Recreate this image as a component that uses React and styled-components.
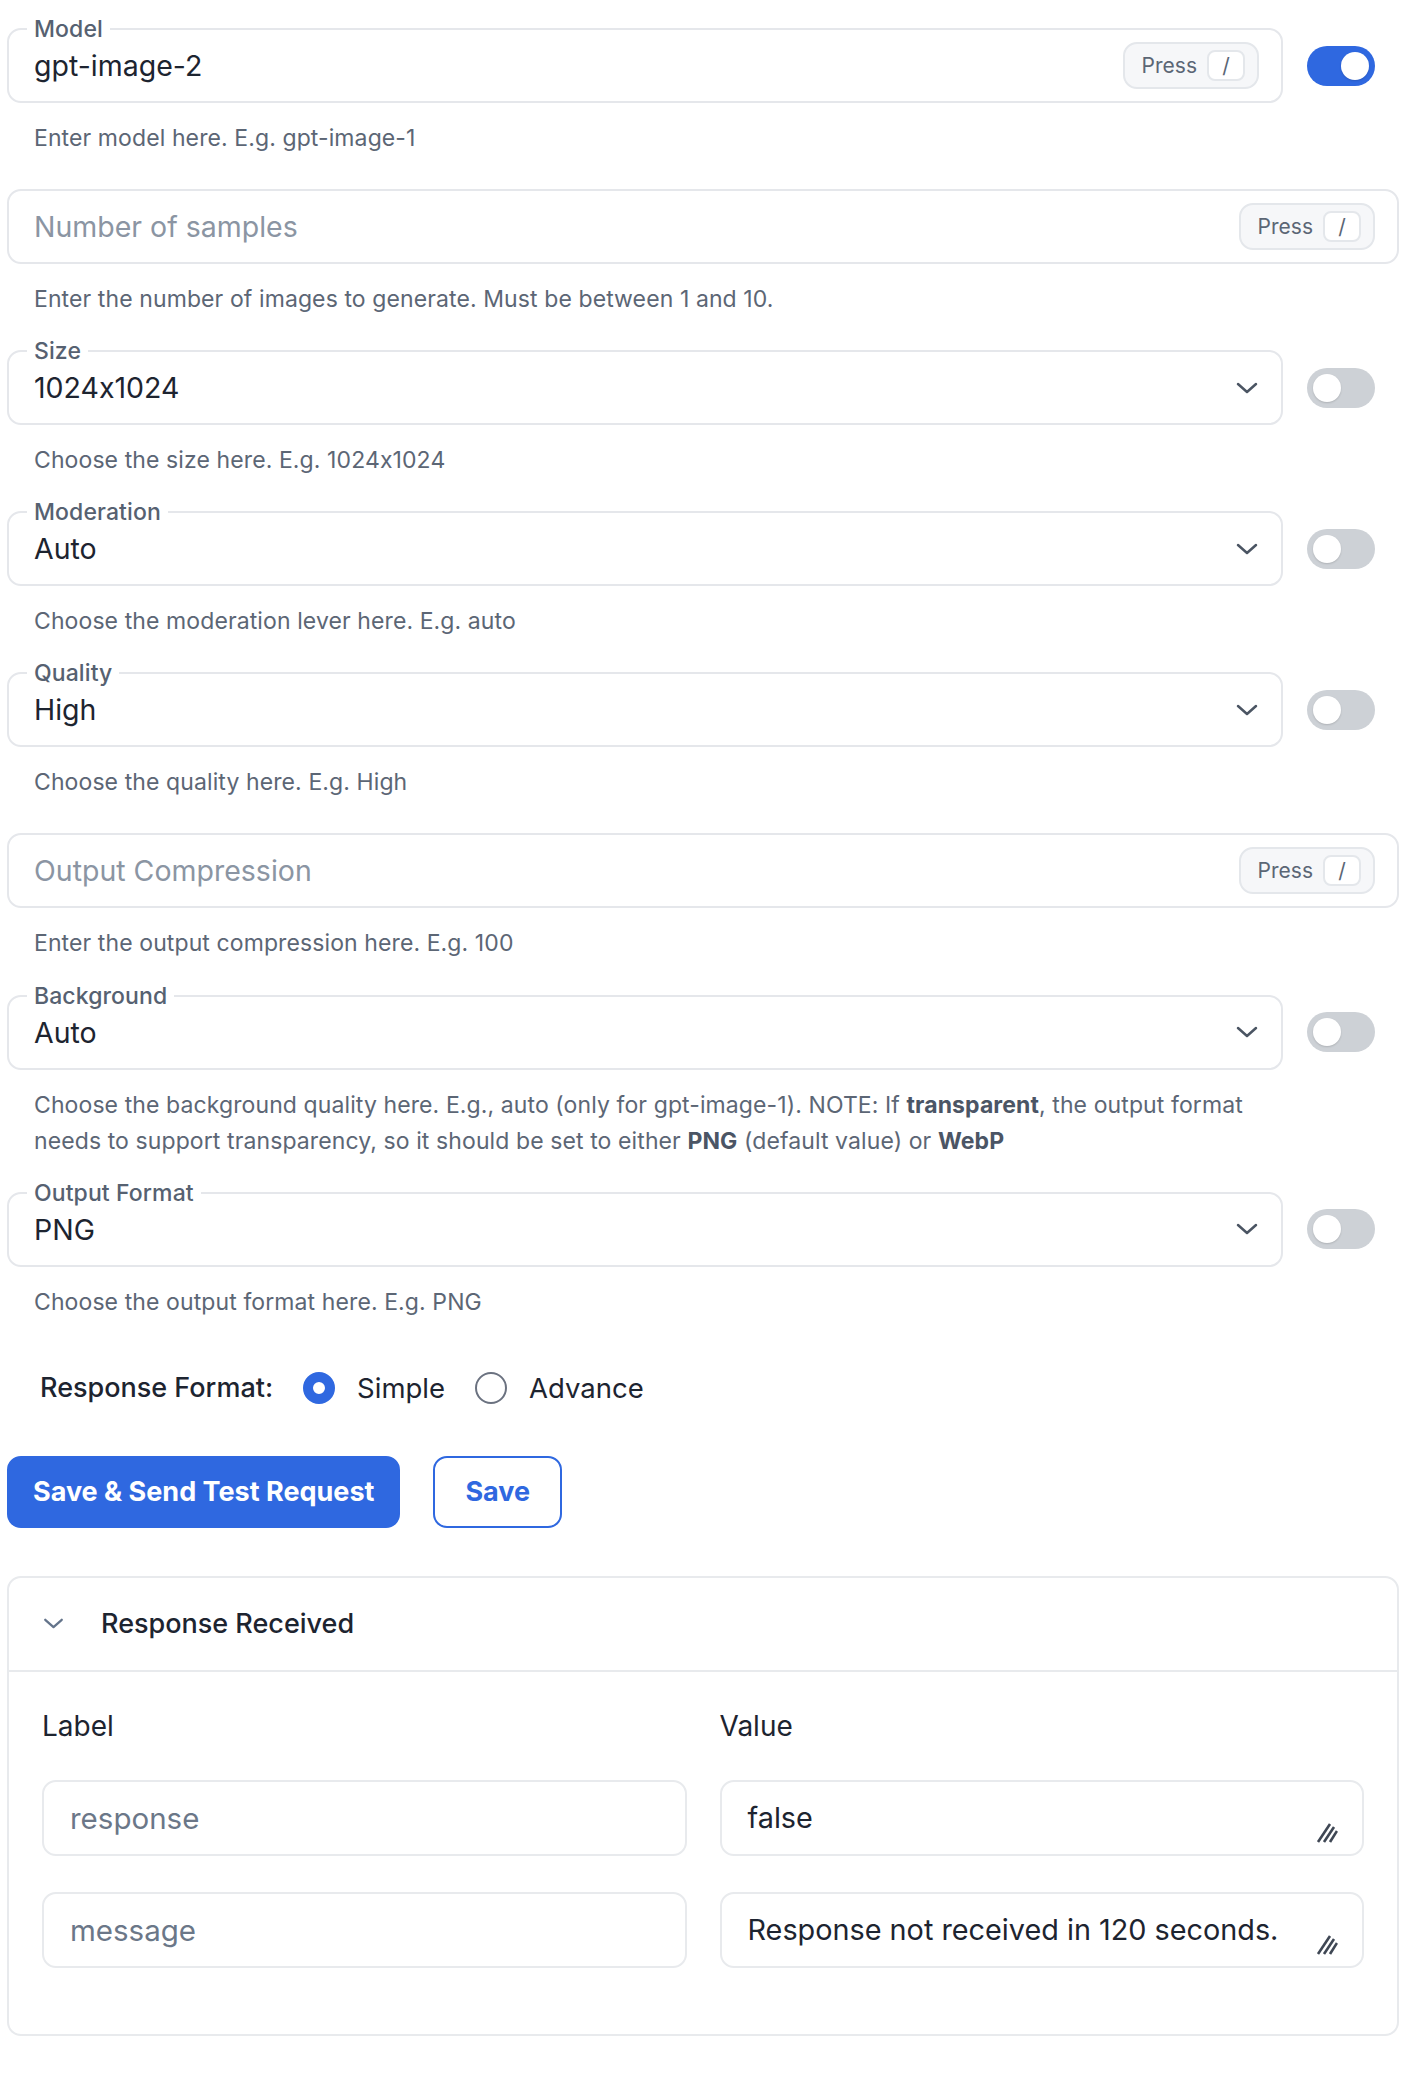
import React from 'react';
import styled, { createGlobalStyle } from 'styled-components';

const GlobalStyle = createGlobalStyle`
  body {
    margin: 0;
    background: #ffffff;
    font-family: Inter, "Noto Sans", sans-serif;
    font-feature-settings: "calt" 0;
    color: #1d2430;
  }
  * { box-sizing: border-box; }
  input, textarea, button { font-feature-settings: "calt" 0; }
`;

const BLUE = '#2f68e0';

const Page = styled.main`
  display: flex;
  flex-direction: column;
  padding: 28px 25px 40px 7px;
`;

const Row = styled.div`
  display: grid;
  grid-template-columns: 1fr 116px;
  margin-bottom: 33.1px;
`;

const Box = styled.div`
  position: relative;
  grid-column: ${p => (p.$full ? '1 / 3' : '1')};
  height: 75px;
  border: 2px solid #e5e7eb;
  border-radius: 14px;
  display: flex;
  align-items: center;
  justify-content: space-between;
  padding: 0 ${p => (p.$select ? '23px' : '22px')} 0 25px;
`;

const FloatLabel = styled.span`
  position: absolute;
  top: -14px;
  left: 18px;
  padding: 0 7px;
  background: #ffffff;
  font-size: 23px;
  line-height: 26px;
  letter-spacing: 0.1px;
  font-weight: 500;
  color: #566171;
`;

const Value = styled.span`
  font-size: 28.5px;
  color: ${p => (p.$placeholder ? '#8b95a3' : '#1d2430')};
`;

const Kbd = styled.span`
  display: flex;
  align-items: center;
  gap: 10px;
  height: 47px;
  padding: 0 12px 0 17px;
  background: #f6f7f9;
  border: 2px solid #e4e7eb;
  border-radius: 14px;
  font-size: 21px;
  color: #5b6675;
`;

const Key = styled.span`
  display: flex;
  align-items: center;
  justify-content: center;
  width: 38px;
  height: 31px;
  background: #ffffff;
  border: 2px solid #e4e7eb;
  border-radius: 8px;
`;

const ToggleCell = styled.div`
  height: 75px;
  display: flex;
  align-items: center;
  justify-content: center;
`;

const Switch = styled.span`
  position: relative;
  width: 68px;
  height: 40px;
  border-radius: 20px;
  background: ${p => (p.$on ? BLUE : '#cdd1d6')};

  &::after {
    content: '';
    position: absolute;
    top: 6px;
    left: ${p => (p.$on ? '34px' : '6px')};
    width: 28px;
    height: 28px;
    border-radius: 50%;
    background: #ffffff;
    box-shadow: 0 1px 2px rgba(0, 0, 0, 0.15);
  }
`;

const Helper = styled.p`
  grid-column: ${p => (p.$full ? '1 / 3' : '1')};
  margin: 17px 0 0;
  padding-left: 27px;
  font-size: 23px;
  line-height: 36px;
  letter-spacing: 0.1px;
  color: #5c6675;

  b {
    font-weight: 700;
    color: #4b5565;
  }
`;

const FormatRow = styled.div`
  display: flex;
  align-items: center;
  height: 40px;
  margin-top: 15px;
  padding-left: 33px;
  font-size: 27px;
`;

const FormatTitle = styled.span`
  font-weight: 500;
  margin-right: 30px;
`;

const RadioOption = styled.label`
  display: flex;
  align-items: center;
  gap: 22px;
  margin-right: 30px;
  font-size: 27.5px;
`;

const RadioDot = styled.span`
  width: 32px;
  height: 32px;
  border-radius: 50%;
  background: #ffffff;
  border: ${p => (p.$checked ? `10px solid ${BLUE}` : '2px solid #6b7280')};
`;

const ButtonRow = styled.div`
  display: flex;
  gap: 33px;
  margin-top: 48px;
`;

const Button = styled.button`
  height: 72px;
  padding: 0 ${p => (p.$outline ? '30px' : '24px')};
  border-radius: 14px;
  border: 2px solid ${BLUE};
  background: ${p => (p.$outline ? '#ffffff' : BLUE)};
  color: ${p => (p.$outline ? BLUE : '#ffffff')};
  font-family: inherit;
  font-size: 27px;
  font-weight: 700;
`;

const Card = styled.section`
  margin-top: 48px;
  border: 2px solid #e8eaed;
  border-radius: 14px;
`;

const CardHeader = styled.div`
  display: flex;
  align-items: center;
  gap: 37px;
  height: 94px;
  padding-left: 34px;
  border-bottom: 2px solid #e8eaed;
  font-size: 27px;
  font-weight: 500;
`;

const CardBody = styled.div`
  display: grid;
  grid-template-columns: 1fr 1fr;
  column-gap: 33px;
  row-gap: 36px;
  padding: 36px 33px 66px;
`;

const ColHead = styled.div`
  font-size: 28px;
  line-height: 36px;
`;

const TextInput = styled.input`
  height: 76px;
  width: 100%;
  padding: 0 26px;
  border: 2px solid #e8eaed;
  border-radius: 14px;
  font-family: inherit;
  font-size: 29.5px;
  color: #1d2430;
  outline: none;

  &::placeholder {
    color: #6b7788;
  }
`;

const AreaWrap = styled.div`
  position: relative;
`;

const TextArea = styled.textarea`
  display: block;
  height: 76px;
  width: 100%;
  padding: 18px 60px 0 26px;
  border: 2px solid #e8eaed;
  border-radius: 14px;
  font-family: inherit;
  font-size: 28.8px;
  line-height: 36px;
  color: #1d2430;
  resize: none;
  outline: none;
  overflow: hidden;
`;

const Grip = styled.svg`
  position: absolute;
  right: 26px;
  bottom: 12px;
`;

const Chevron = ({ w = 22, h = 12, color = '#4b5563' }) => (
  <svg width={w} height={h} viewBox="0 0 22 12" fill="none">
    <polyline points="2,2 11,10 20,2" stroke={color} strokeWidth="2.5" strokeLinecap="round" strokeLinejoin="round" />
  </svg>
);

const PressKey = () => (
  <Kbd>
    Press
    <Key>/</Key>
  </Kbd>
);

function Field({ label, value, placeholder, select, toggle, helper }) {
  const full = toggle === undefined;
  return (
    <Row>
      <Box $full={full} $select={select}>
        {label && <FloatLabel>{label}</FloatLabel>}
        <Value $placeholder={!value}>{value || placeholder}</Value>
        {select ? <Chevron /> : <PressKey />}
      </Box>
      {!full && (
        <ToggleCell>
          <Switch $on={toggle} />
        </ToggleCell>
      )}
      <Helper $full={full}>{helper}</Helper>
    </Row>
  );
}

const ResizeGrip = () => (
  <Grip width="22" height="22" viewBox="0 0 22 22">
    <g stroke="#3f4754" strokeWidth="2.6" strokeLinecap="butt">
      <line x1="14" y1="2" x2="2" y2="20" />
      <line x1="18" y1="5" x2="8" y2="20" />
      <line x1="21" y1="9" x2="14" y2="20" />
    </g>
  </Grip>
);

export default function App() {
  return (
    <>
      <GlobalStyle />
      <Page>
        <Field label="Model" value="gpt-image-2" toggle={true} helper="Enter model here. E.g. gpt-image-1" />
        <Field
          placeholder="Number of samples"
          helper="Enter the number of images to generate. Must be between 1 and 10."
        />
        <Field label="Size" value="1024x1024" select toggle={false} helper="Choose the size here. E.g. 1024x1024" />
        <Field label="Moderation" value="Auto" select toggle={false} helper="Choose the moderation lever here. E.g. auto" />
        <Field label="Quality" value="High" select toggle={false} helper="Choose the quality here. E.g. High" />
        <Field placeholder="Output Compression" helper="Enter the output compression here. E.g. 100" />
        <Field
          label="Background"
          value="Auto"
          select
          toggle={false}
          helper={
            <>
              Choose the background quality here. E.g., auto (only for gpt-image-1). NOTE: If <b>transparent</b>, the output format
              <br />
              needs to support transparency, so it should be set to either <b>PNG</b> (default value) or <b>WebP</b>
            </>
          }
        />
        <Field label="Output Format" value="PNG" select toggle={false} helper="Choose the output format here. E.g. PNG" />

        <FormatRow>
          <FormatTitle>Response Format:</FormatTitle>
          <RadioOption>
            <RadioDot $checked />
            Simple
          </RadioOption>
          <RadioOption>
            <RadioDot />
            Advance
          </RadioOption>
        </FormatRow>

        <ButtonRow>
          <Button>Save &amp; Send Test Request</Button>
          <Button $outline>Save</Button>
        </ButtonRow>

        <Card>
          <CardHeader>
            <Chevron w={21} h={11} color="#64748b" />
            Response Received
          </CardHeader>
          <CardBody>
            <ColHead>Label</ColHead>
            <ColHead>Value</ColHead>
            <TextInput placeholder="response" readOnly />
            <AreaWrap>
              <TextArea readOnly value="false" />
              <ResizeGrip />
            </AreaWrap>
            <TextInput placeholder="message" readOnly />
            <AreaWrap>
              <TextArea readOnly value="Response not received in 120 seconds." />
              <ResizeGrip />
            </AreaWrap>
          </CardBody>
        </Card>
      </Page>
    </>
  );
}
